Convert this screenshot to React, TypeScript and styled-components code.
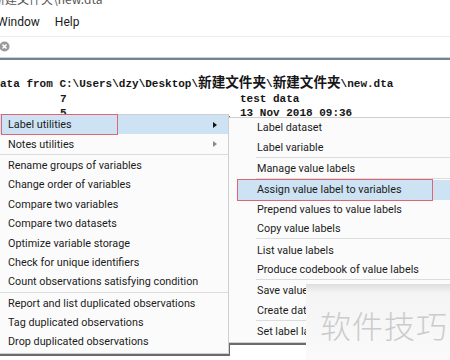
import React from "react";
import styled, { createGlobalStyle } from "styled-components";

const GlobalStyle = createGlobalStyle`
  html, body {
    margin: 0;
    padding: 0;
    background: #ffffff;
  }
  body {
    width: 450px;
    height: 360px;
    overflow: hidden;
  }
`;

const Screen = styled.div`
  position: relative;
  width: 450px;
  height: 360px;
  overflow: hidden;
  display: flex;
  flex-direction: column;
  background: #ffffff;
  font-family: Roboto, "Noto Sans", sans-serif;
`;

const TitleBar = styled.div`
  height: 8px;
  overflow: hidden;
  background: #ffffff;
`;

const TitleText = styled.div`
  margin-top: -8px;
  margin-left: -7px;
  font-family: "Noto Sans CJK SC", "Noto Sans", sans-serif;
  font-size: 12px;
  line-height: 14px;
  color: #555;
  white-space: nowrap;
`;

const MenuBar = styled.div`
  display: flex;
  align-items: center;
  gap: 15px;
  height: 28px;
  font-size: 12px;
  color: #1a1a1a;
  border-bottom: 1px solid #ececec;
`;

const MenuBarItem = styled.span<{ $shift?: number }>`
  margin-left: ${(p) => p.$shift ?? 0}px;
`;

const Toolbar = styled.div`
  height: 21px;
  display: flex;
  align-items: center;
  background: #ffffff;
  border-bottom: 2px solid #74838f;
  box-shadow: 0 -1px 0 #c9d3db inset;
`;

const CloseIcon = styled.svg`
  margin-left: -1px;
  margin-top: -2px;
  width: 11px;
  height: 11px;
`;

const Results = styled.div`
  flex: 1;
  padding-top: 15px;
  font-family: "Liberation Mono", monospace;
  font-weight: bold;
  font-size: 11px;
  line-height: 14.5px;
  color: #161616;
  white-space: pre;
`;

const PathLine = styled.div`
  margin-left: -6.6px;
`;

const Cjk = styled.span`
  font-family: "Noto Sans CJK SC", sans-serif;
  font-size: 13.6px;
  line-height: 1;
  font-weight: bold;
`;

const InfoRow = styled.div`
  display: flex;
`;

const InfoValue = styled.span`
  width: 240px;
  padding-left: 60px;
  box-sizing: border-box;
`;

const InfoNote = styled.span``;

const PopupMenu = styled.div<{ $left: number; $top: number; $width: number }>`
  position: absolute;
  left: ${(p) => p.$left}px;
  top: ${(p) => p.$top}px;
  width: ${(p) => p.$width}px;
  background: #fbfbfb;
  border: 1px solid #cfcfcf;
  box-sizing: border-box;
  padding: 0 0 1px;
  font-family: Roboto, "Noto Sans", sans-serif;
  font-size: 10.8px;
  color: #1b1b1b;
  box-shadow: 1px 2px 0 #6b6b6b;
`;

const Item = styled.div<{ $active?: boolean; $indent: number; $inset?: number }>`
  position: relative;
  display: flex;
  align-items: center;
  height: 19.4px;
  margin-left: ${(p) => p.$inset ?? 0}px;
  padding-left: ${(p) => p.$indent}px;
  background: ${(p) => (p.$active ? "#cde3f3" : "transparent")};
  white-space: nowrap;
`;

const Arrow = styled.span<{ $muted?: boolean }>`
  position: absolute;
  right: 11px;
  top: 6.5px;
  width: 0;
  height: 0;
  border-top: 3.5px solid transparent;
  border-bottom: 3.5px solid transparent;
  border-left: 4px solid ${(p) => (p.$muted ? "#8a8a8a" : "#111")};
`;

const Separator = styled.div<{ $indent: number }>`
  height: 2px;
  margin-left: ${(p) => p.$indent}px;
  border-top: 1px solid #dcdcdc;
  box-sizing: border-box;
`;

const Callout = styled.div<{ $left: number; $width: number }>`
  position: absolute;
  left: ${(p) => p.$left}px;
  width: ${(p) => p.$width}px;
  top: -1px;
  bottom: -1px;
  border: 1.5px solid #e06472;
  box-sizing: border-box;
  pointer-events: none;
`;

const Watermark = styled.div`
  position: absolute;
  left: 306px;
  top: 284px;
  right: 0;
  bottom: 0;
  display: flex;
  align-items: center;
  padding-left: 14px;
  padding-top: 4px;
  background: linear-gradient(
    to bottom,
    #dedede 0px,
    #f4f4f4 9px,
    #fafafa 100%
  );
  font-family: "Noto Sans CJK SC", sans-serif;
  font-weight: 300;
  font-size: 31px;
  letter-spacing: 1px;
  color: #cbcbcb;
`;

type Entry =
  | { label: string; arrow?: "dark" | "muted"; active?: boolean; callout?: number }
  | "sep";

const leftEntries: Entry[] = [
  { label: "Label utilities", arrow: "dark", active: true, callout: 117 },
  { label: "Notes utilities", arrow: "muted" },
  "sep",
  { label: "Rename groups of variables" },
  { label: "Change order of variables" },
  { label: "Compare two variables" },
  { label: "Compare two datasets" },
  { label: "Optimize variable storage" },
  { label: "Check for unique identifiers" },
  { label: "Count observations satisfying condition" },
  "sep",
  { label: "Report and list duplicated observations" },
  { label: "Tag duplicated observations" },
  { label: "Drop duplicated observations" },
];

const rightEntries: Entry[] = [
  { label: "Label dataset" },
  { label: "Label variable" },
  "sep",
  { label: "Manage value labels" },
  "sep",
  { label: "Assign value label to variables", active: true, callout: 196 },
  { label: "Prepend values to value labels" },
  { label: "Copy value labels" },
  "sep",
  { label: "List value labels" },
  { label: "Produce codebook of value labels" },
  "sep",
  { label: "Save value labels as do-file" },
  { label: "Create dataset from value labels" },
  "sep",
  { label: "Set label language" },
];

function MenuList({
  entries,
  indent,
  inset,
  sepIndent,
  calloutLeft,
}: {
  entries: Entry[];
  indent: number;
  inset: number;
  sepIndent: number;
  calloutLeft: number;
}) {
  return (
    <>
      {entries.map((e, i) =>
        e === "sep" ? (
          <Separator key={i} $indent={sepIndent} />
        ) : (
          <Item key={i} $active={e.active} $indent={indent} $inset={inset}>
            {e.label}
            {e.arrow && <Arrow $muted={e.arrow === "muted"} />}
            {e.callout && <Callout $left={calloutLeft} $width={e.callout} />}
          </Item>
        )
      )}
    </>
  );
}

export default function App() {
  return (
    <>
      <GlobalStyle />
      <Screen>
        <TitleBar>
          <TitleText>新建文件夹\new.dta</TitleText>
        </TitleBar>
        <MenuBar>
          <MenuBarItem $shift={-3}>Window</MenuBarItem>
          <MenuBarItem>Help</MenuBarItem>
        </MenuBar>
        <Toolbar>
          <CloseIcon viewBox="0 0 12 12">
            <circle cx="6" cy="6" r="5.5" fill="#9a9a9a" />
            <path d="M3.8 3.8 L8.2 8.2 M8.2 3.8 L3.8 8.2" stroke="#fff" strokeWidth="1.6" />
          </CloseIcon>
        </Toolbar>
        <Results>
          <PathLine>
            Data from C:\Users\dzy\Desktop\<Cjk>新建文件夹</Cjk>\<Cjk>新建文件夹</Cjk>\new.dta
          </PathLine>
          <InfoRow>
            <InfoValue>7</InfoValue>
            <InfoNote>test data</InfoNote>
          </InfoRow>
          <InfoRow>
            <InfoValue>5</InfoValue>
            <InfoNote>13 Nov 2018 09:36</InfoNote>
          </InfoRow>
        </Results>

        <PopupMenu $left={-2} $top={114} $width={231}>
          <MenuList entries={leftEntries} indent={9} inset={0} sepIndent={0} calloutLeft={2} />
        </PopupMenu>

        <PopupMenu $left={228} $top={117} $width={240}>
          <MenuList entries={rightEntries} indent={20} inset={8} sepIndent={27} calloutLeft={0} />
        </PopupMenu>

        <Watermark>软件技巧</Watermark>
      </Screen>
    </>
  );
}
